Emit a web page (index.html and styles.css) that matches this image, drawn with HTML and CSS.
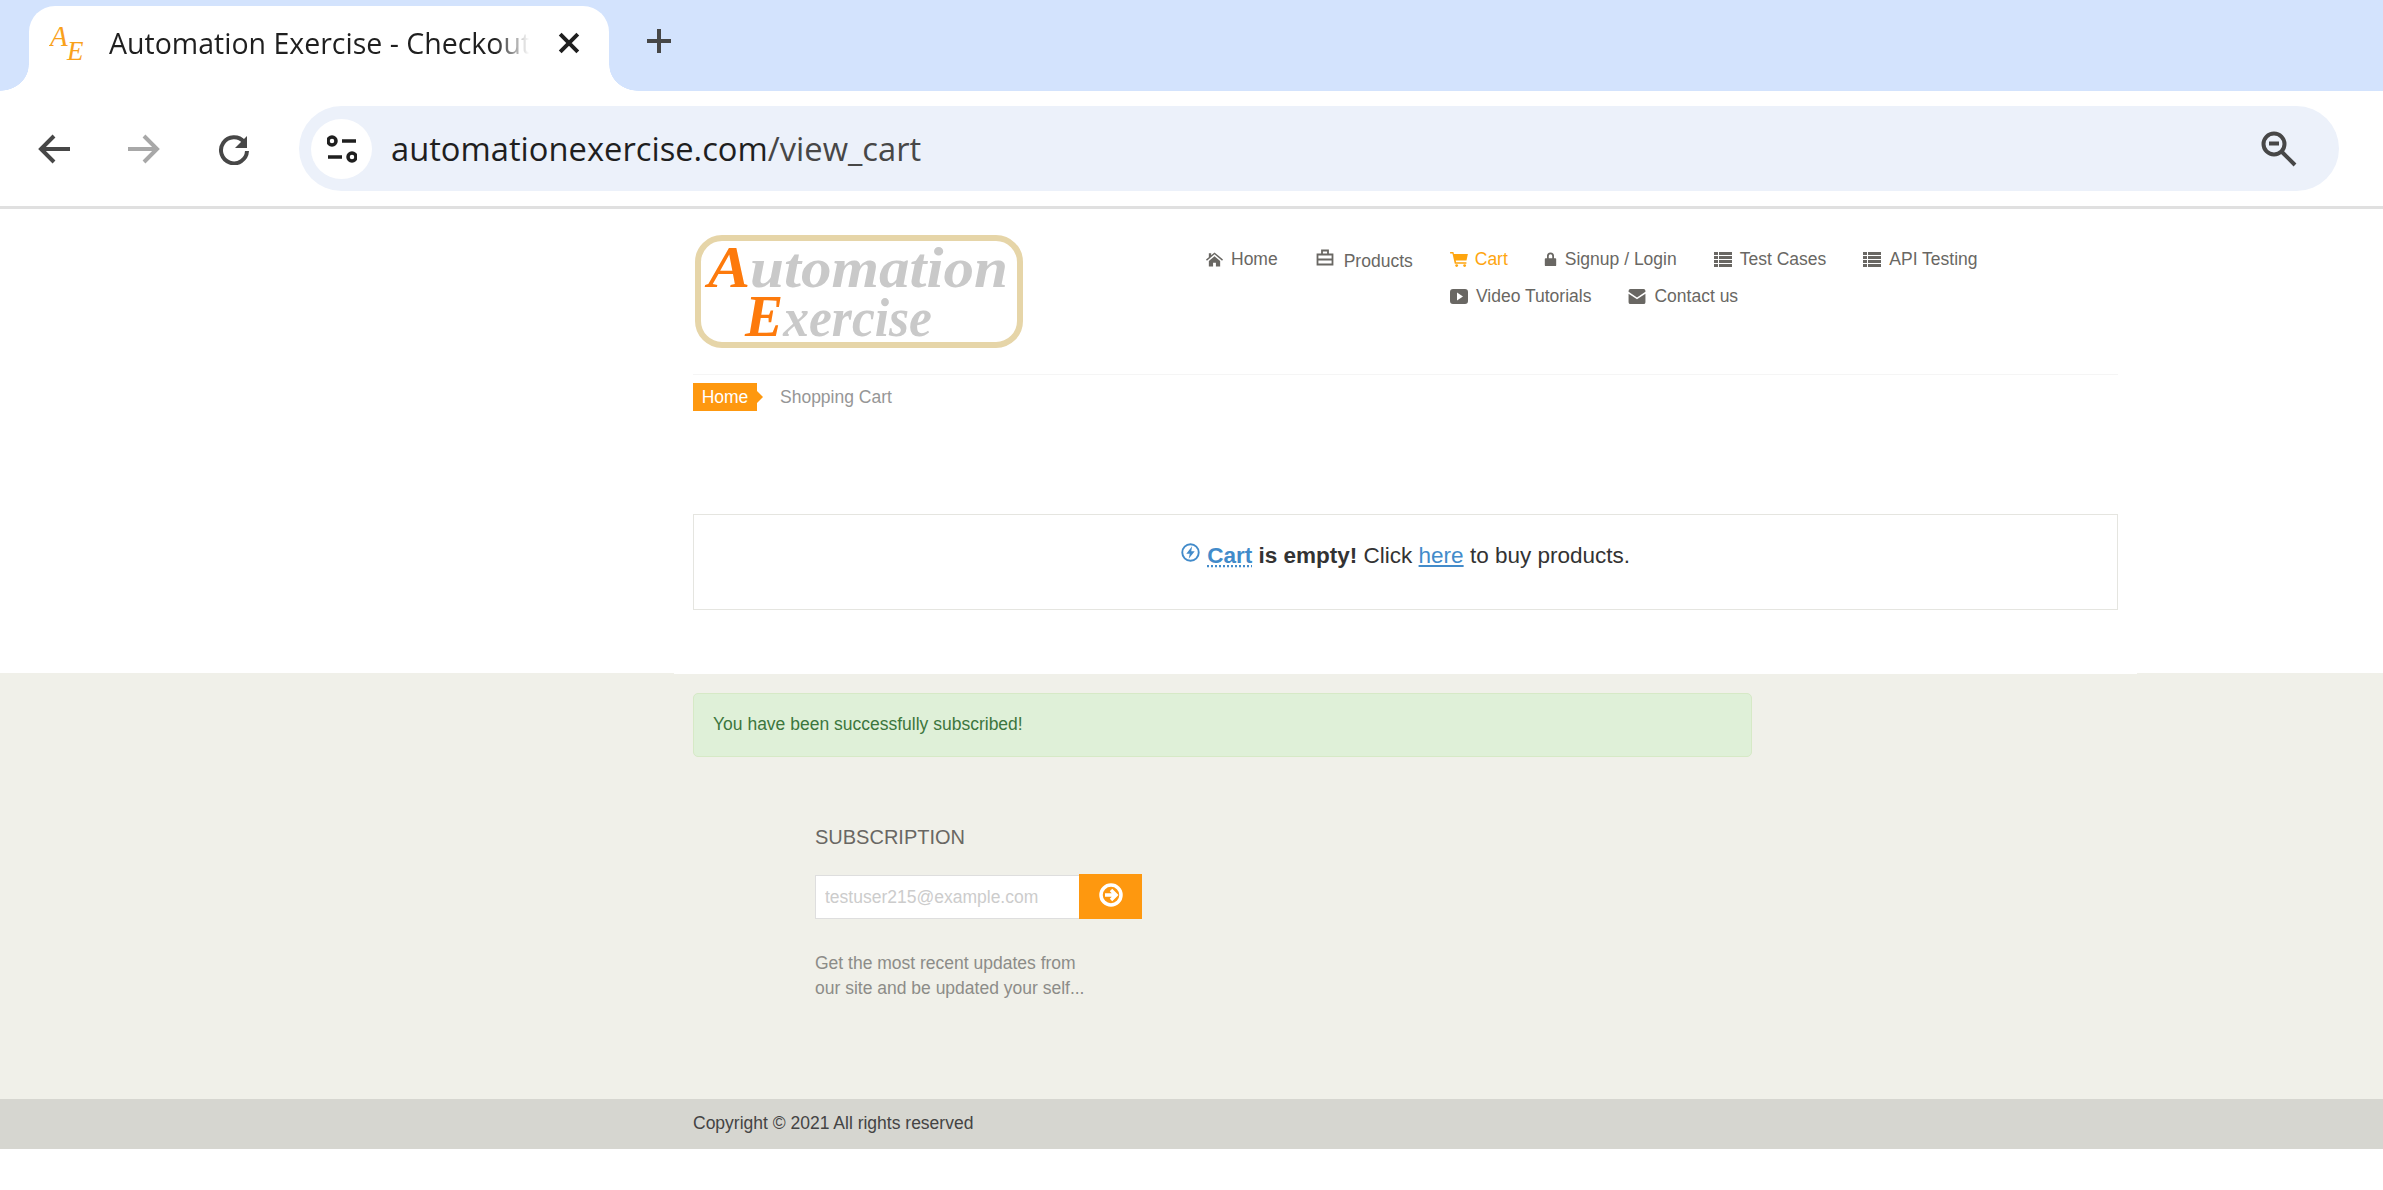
FILE: index.html
```html
<!DOCTYPE html>
<html lang="en">
<head>
  <meta charset="UTF-8" />
  <title>Automation Exercise - Checkout</title>
  <link rel="stylesheet" href="styles.css">
</head>
<body>
  <svg class="defs" width="0" height="0">
    <symbol id="i-list" viewBox="0 0 18 15">
      <path d="M0 0h4v3H0zM5 0h13v3H5zM0 4h4v3H0zM5 4h13v3H5zM0 8h4v3H0zM5 8h13v3H5zM0 12h4v3H0zM5 12h13v3H5z" />
    </symbol>
  </svg>

  <div class="tabstrip">
    <div class="tab">
      <svg class="favicon" viewBox="0 -8 40 48">
        <text x="1" y="19" class="fav-letter fav-a">A</text>
        <text x="18" y="33" class="fav-letter">E</text>
      </svg>
      <span class="tab-title">Automation Exercise - Checkout</span>
      <svg class="tab-close" viewBox="0 0 20 20"><path d="M2 2l16 16M18 2L2 18" /></svg>
    </div>
    <svg class="new-tab" viewBox="0 0 26 26"><path d="M13 1v24M1 13h24" /></svg>
  </div>

  <div class="toolbar">
    <svg class="nav-btn" viewBox="0 0 44 32"><path d="M38 16H10M22 3L9 16l13 13" /></svg>
    <svg class="nav-btn nav-btn-off" viewBox="0 0 44 32"><path d="M6 16h28M22 3l13 13-13 13" /></svg>
    <svg class="nav-btn" viewBox="0 0 44 32"><path d="M32 9a13 13 0 1 0 3 9" /><path class="solid" d="M35 3v12H23z" /></svg>
    <div class="omnibox">
      <span class="site-info">
        <svg class="tune" viewBox="0 0 30 28">
          <circle cx="5" cy="6" r="4" /><path d="M15 6h14M1 22h14" /><circle cx="25" cy="22" r="4" />
        </svg>
      </span>
      <div class="url"><span class="domain">automationexercise.com</span><span>/view_cart</span></div>
      <svg class="zoom-out" viewBox="0 0 36 36">
        <circle cx="13" cy="13" r="10.5" /><path d="M21 21l13 13M8 12.500h10" />
      </svg>
    </div>
  </div>

  <header class="site-header">
    <svg class="logo" viewBox="0 0 328 113">
      <rect x="3" y="3" width="322" height="107" rx="24" class="logo-frame" />
      <text x="13" y="52" class="logo-text" textLength="300" lengthAdjust="spacingAndGlyphs"><tspan class="logo-cap">A</tspan>utomation</text>
      <text x="50" y="101" class="logo-text logo-text-small" textLength="187" lengthAdjust="spacingAndGlyphs"><tspan class="logo-cap">E</tspan>xercise</text>
    </svg>
    <nav class="main-nav">
      <ul class="nav-row">
        <li class="nav-item">
          <svg class="ico ico-home" viewBox="0 0 18 15"><path d="M9 0l9 7.500-1 1.200L9 2 1 8.700 0 7.500 3 5V1h2.500v2zM3 9l6-5 6 5v6h-4.500v-4h-3v4H3z" /></svg>
          Home
        </li>
        <li class="nav-item nav-products">
          <svg class="ico ico-line" viewBox="0 0 18 17"><path d="M1.500 5.500h15v10h-15zM1.500 10.500h15M6 5V1.500h6V5" /></svg>
          <span class="drop">Products</span>
        </li>
        <li class="nav-item nav-cart active">
          <svg class="ico" viewBox="0 0 19 16"><path d="M0 0h3.500l.6 2H19l-1.500 7H6l.4 2h11v1.500H5L2.500 1.500H0z" /><circle cx="7" cy="14.500" r="1.500" /><circle cx="15.500" cy="14.500" r="1.500" /></svg>
          Cart
        </li>
        <li class="nav-item">
          <svg class="ico ico-lock" viewBox="0 0 13 16"><path d="M2.500 7V4.500a4 4 0 0 1 8 0V7h1.500a1 1 0 0 1 1 1v7a1 1 0 0 1-1 1H1a1 1 0 0 1-1-1V8a1 1 0 0 1 1-1zM4.500 7h4V4.500a2 2 0 0 0-4 0z" /></svg>
          Signup / Login
        </li>
        <li class="nav-item">
          <svg class="ico"><use href="#i-list" /></svg>
          Test Cases
        </li>
        <li class="nav-item">
          <svg class="ico"><use href="#i-list" /></svg>
          API Testing
        </li>
      </ul>
      <ul class="nav-row nav-row-second">
        <li class="nav-item">
          <svg class="ico" viewBox="0 0 18 15"><path fill-rule="evenodd" d="M3 0h12a3 3 0 0 1 3 3v9a3 3 0 0 1-3 3H3a3 3 0 0 1-3-3V3a3 3 0 0 1 3-3zM7 3.500v8l6-4z" /></svg>
          Video Tutorials
        </li>
        <li class="nav-item">
          <svg class="ico" viewBox="0 0 18 16"><path d="M0 2a2 2 0 0 1 2-2h14a2 2 0 0 1 2 2v1L9 9 0 3zM0 5l9 6 9-6v9a2 2 0 0 1-2 2H2a2 2 0 0 1-2-2z" /></svg>
          Contact us
        </li>
      </ul>
    </nav>
  </header>

  <main class="page">
    <div class="breadcrumb">
      <a class="crumb-home">Home</a>
      <span class="crumb-current">Shopping Cart</span>
    </div>
    <div class="cart-empty">
      <svg class="bolt" viewBox="0 0 18 18"><circle cx="9" cy="9" r="7.800" /><path class="solid" d="M10.500 3L5 10.200H8.300L7.300 15 13 7.800H9.700z" /></svg>
      <b class="cart-word">Cart</b> <b>is empty!</b> Click <a class="here">here</a> to buy products.
    </div>
  </main>

  <footer class="site-footer">
    <div class="footer-widgets">
      <div class="alert-ok">You have been successfully subscribed!</div>
      <div class="subscribe">
        <h2>SUBSCRIPTION</h2>
        <form class="subscribe-form">
          <input type="email" placeholder="testuser215@example.com" />
          <button type="button">
            <svg viewBox="0 0 24 24"><circle cx="12" cy="12" r="10" /><path d="M6 12h10M12 7l5 5-5 5" /></svg>
          </button>
        </form>
        <p>Get the most recent updates from<br>our site and be updated your self...</p>
      </div>
    </div>
    <div class="copyright">
      <p>Copyright © 2021 All rights reserved</p>
    </div>
  </footer>
</body>
</html>
```

FILE: styles.css
```css
* {
  box-sizing: border-box;
}

html, body {
  height: 100%;
}

body {
  margin: 0;
  background: #fff;
  font-family: "Liberation Sans", Arial, sans-serif;
  font-size: 17.5px;
  overflow: hidden;
}

.defs {
  position: absolute;
}

/* browser chrome */
.tabstrip {
  height: 91px;
  background: #d3e3fd;
  padding: 6px 0 0 29px;
  display: flex;
  align-items: flex-start;
}

.tab {
  position: relative;
  width: 580px;
  height: 85px;
  background: #fff;
  border-radius: 26px 26px 0 0;
  display: flex;
  align-items: center;
  padding: 0 0 12px 20px;
}

.tab::before,
.tab::after {
  content: "";
  position: absolute;
  bottom: 0;
  width: 29px;
  height: 26px;
}

.tab::before {
  left: -29px;
  background: radial-gradient(ellipse 29px 26px at 0 0, #d3e3fd 98%, #fff 100%);
}

.tab::after {
  right: -29px;
  background: radial-gradient(ellipse 29px 26px at 100% 0, #d3e3fd 98%, #fff 100%);
}

.favicon {
  width: 40px;
  height: 48px;
  flex: none;
}

.fav-letter {
  font-family: "Liberation Serif", serif;
  font-style: italic;
  font-size: 27px;
  fill: #f9a11b;
}

.fav-a {
  font-size: 29px;
}

.tab-title {
  width: 420px;
  margin-left: 20px;
  font-family: "Open Sans", sans-serif;
  font-size: 28.500px;
  color: #1f1f1f;
  white-space: nowrap;
  overflow: hidden;
  -webkit-mask-image: linear-gradient(to right, #000 92%, transparent 100%);
  mask-image: linear-gradient(to right, #000 92%, transparent 100%);
}

.tab-close {
  width: 22px;
  height: 22px;
  margin-left: 29px;
  fill: none;
  stroke: #1f1f1f;
  stroke-width: 3.600;
}

.new-tab {
  width: 26px;
  height: 26px;
  margin: 22px 0 0 37px;
  fill: none;
  stroke: #474747;
  stroke-width: 4;
}

.toolbar {
  height: 118px;
  padding: 0 44px 0 32px;
  background: #fff;
  border-bottom: 3px solid #e0e0e0;
  display: flex;
  align-items: center;
  gap: 46px;
}

.nav-btn {
  width: 44px;
  height: 32px;
  flex: none;
  fill: none;
  stroke: #474747;
  stroke-width: 4;
}

.nav-btn-off {
  stroke: #a8a8a8;
}

.nav-btn .solid {
  fill: #474747;
  stroke: none;
}

.omnibox {
  flex: 1;
  height: 85px;
  margin-left: -3px;
  background: #ecf1fa;
  border-radius: 43px;
  display: flex;
  align-items: center;
  padding: 0 42px 0 12px;
}

.site-info {
  width: 61px;
  height: 60px;
  background: #fff;
  border-radius: 50%;
  display: flex;
  align-items: center;
  justify-content: center;
  flex: none;
}

.tune {
  width: 30px;
  height: 28px;
  fill: none;
  stroke: #1f1f1f;
  stroke-width: 3.500;
}

.url {
  display: flex;
  margin-left: 19px;
  font-family: "Open Sans", sans-serif;
  font-size: 32.700px;
  color: #474747;
}

.domain {
  color: #1f1f1f;
}

.zoom-out {
  width: 36px;
  height: 36px;
  margin-left: auto;
  fill: none;
  stroke: #474747;
  stroke-width: 4;
}

/* site header */
.site-header {
  margin-left: 695px;
  padding-top: 26px;
  display: flex;
  align-items: flex-start;
}

.logo {
  width: 328px;
  height: 113px;
  flex: none;
}

.logo-frame {
  fill: #fff;
  stroke: #e6d5a8;
  stroke-width: 6;
}

.logo-text {
  font-family: "Liberation Serif", serif;
  font-style: italic;
  font-weight: bold;
  font-size: 58px;
  fill: #c9c9c9;
}

.logo-text-small {
  font-size: 54px;
}

.logo-cap {
  font-size: 60px;
  fill: #fd7a0c;
}

.main-nav {
  margin: 6px 0 0 183px;
}

.nav-row {
  list-style: none;
  margin: 0;
  padding: 0;
  height: 37px;
  display: flex;
  align-items: center;
  gap: 37px;
}

.nav-row-second {
  margin-left: 244px;
}

.nav-item {
  display: flex;
  align-items: center;
  gap: 8px;
  color: #696763;
  white-space: nowrap;
}

.nav-item.active {
  color: #fea50f;
}

.nav-products {
  gap: 10px;
  margin-left: 1px;
}

.nav-cart {
  gap: 7px;
  margin-right: -1px;
}

.ico {
  width: 18px;
  height: 15px;
  fill: currentColor;
  flex: none;
}

.ico-home {
  width: 17px;
}

.ico-lock {
  width: 13px;
  height: 14px;
  margin-top: -1px;
}

.ico-line {
  height: 17px;
  margin-top: -5px;
  fill: none;
  stroke: currentColor;
  stroke-width: 1.800;
}

.drop {
  padding-top: 3px;
}

/* page body */
.page {
  width: 1425px;
  margin-left: 693px;
  margin-top: 26px;
  border-top: 1px solid #f5f5f5;
  padding-top: 8px;
}

.breadcrumb {
  display: flex;
  align-items: center;
}

.crumb-home {
  position: relative;
  width: 64px;
  height: 28px;
  line-height: 28px;
  background: #fe980f;
  color: #fff;
  text-align: center;
}

.crumb-home::after {
  content: "";
  position: absolute;
  right: -6px;
  top: 8px;
  border-left: 6px solid #fe980f;
  border-top: 6px solid transparent;
  border-bottom: 6px solid transparent;
}

.crumb-current {
  margin-left: 23px;
  color: #969696;
}

.cart-empty {
  height: 96px;
  margin-top: 103px;
  border: 1px solid #e5e5e0;
  padding-top: 26px;
  padding-left: 487px;
  font-size: 22.500px;
  line-height: 30px;
  color: #333;
}

.bolt {
  width: 19px;
  height: 19px;
  margin-right: 1px;
  vertical-align: 1px;
  fill: none;
  stroke: #428bca;
  stroke-width: 1.800;
}

.bolt .solid {
  fill: #428bca;
  stroke: none;
}

.cart-word {
  color: #428bca;
  text-decoration: underline dotted;
}

.here {
  color: #428bca;
  text-decoration: underline;
}

/* footer */
.site-footer {
  margin-top: 63px;
  background: #f0f0e9;
}

.footer-widgets {
  width: 1463px;
  height: 426px;
  margin-left: 674px;
  border-top: 1px solid #fff;
  padding: 19px 0 0 19px;
}

.alert-ok {
  width: 1059px;
  height: 64px;
  line-height: 60px;
  padding-left: 19px;
  background: #dff0d8;
  border: 1px solid #d6e9c6;
  border-radius: 5px;
  color: #3c763d;
}

.subscribe {
  margin-left: 122px;
  padding-top: 68px;
}

.subscribe h2 {
  margin: 0;
  font-size: 20px;
  font-weight: normal;
  line-height: 24px;
  color: #696763;
}

.subscribe-form {
  display: flex;
  margin-top: 25px;
}

.subscribe-form input {
  width: 264px;
  height: 44px;
  margin-top: 1px;
  padding: 0 9px;
  background: #fff;
  border: 1px solid #dedede;
  border-right: 0;
  outline: none;
  font-family: inherit;
  font-size: 17.500px;
}

.subscribe-form input::placeholder {
  color: #ccc;
  opacity: 1;
}

.subscribe-form button {
  width: 63px;
  height: 45px;
  padding: 0 0 3px;
  background: #fe980f;
  border: none;
  display: flex;
  align-items: center;
  justify-content: center;
}

.subscribe-form svg {
  width: 24px;
  height: 24px;
  fill: none;
  stroke: #fff;
  stroke-width: 3.500;
}

.subscribe p {
  margin: 32px 0 0;
  line-height: 25px;
  color: #8c8c88;
}

.copyright {
  height: 50px;
  background: #d6d6d0;
  padding: 0 0 2px 693px;
  display: flex;
  align-items: center;
}

.copyright p {
  margin: 0;
  color: #444;
}
```
